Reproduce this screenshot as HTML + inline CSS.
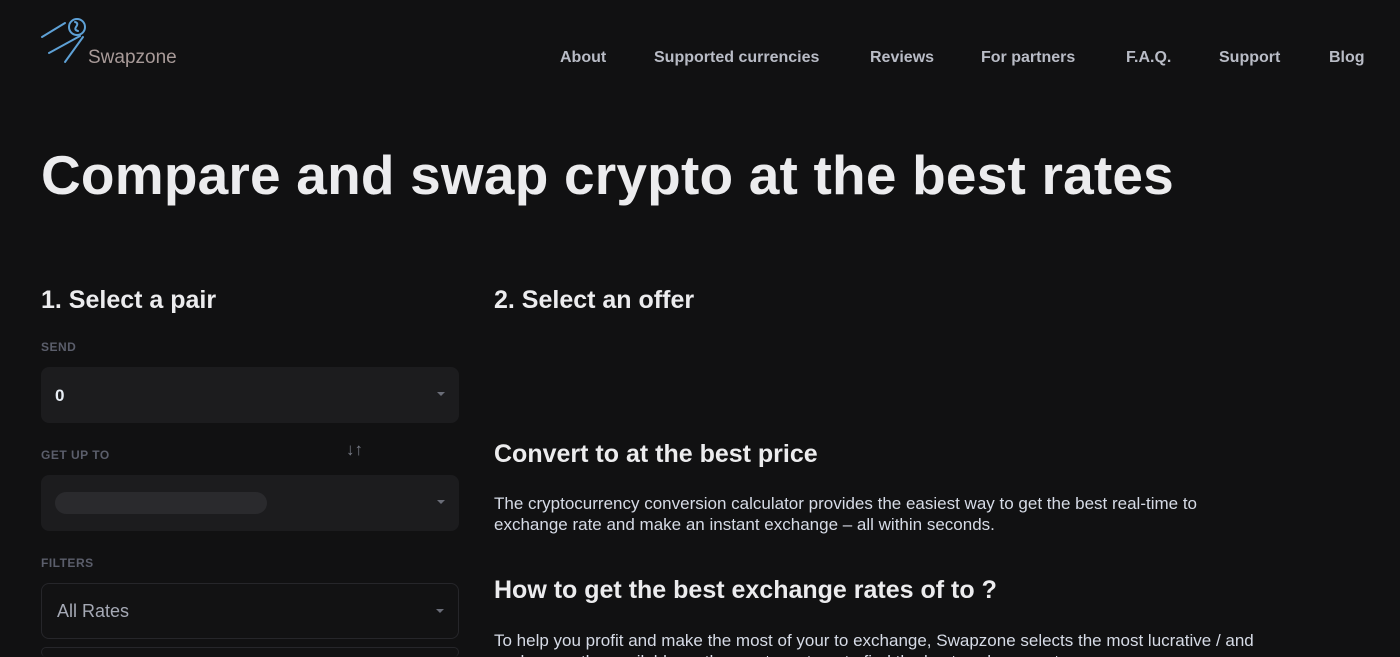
<!DOCTYPE html>
<html><head><meta charset="utf-8"><style>
*{margin:0;padding:0;box-sizing:border-box}
html,body{width:1400px;height:657px;overflow:hidden}
body{background:#111112;font-family:"Liberation Sans",sans-serif;color:#e8e8ea;position:relative}
.a{position:absolute}
.nav a{position:absolute;top:49px;font-size:16px;font-weight:bold;color:#b9bcc6;text-decoration:none;white-space:nowrap}
h1{position:absolute;left:41px;top:143px;font-size:55px;font-weight:bold;color:#ececee;white-space:nowrap;letter-spacing:0.2px}
h2{position:absolute;font-size:25px;font-weight:bold;color:#ececee;white-space:nowrap}
.lab{position:absolute;left:41px;font-size:12px;font-weight:bold;color:#5b5e6b;letter-spacing:0.5px}
.box{position:absolute;left:41px;width:418px;height:56px;border-radius:8px;background:#1c1c1e}
.car{position:absolute;right:14px;top:25px;width:0;height:0;border-left:4px solid transparent;border-right:4px solid transparent;border-top:4px solid #6a6d78}
p{position:absolute;left:494px;font-size:17px;line-height:21px;color:#d6dbe6;width:770px}
</style></head><body>
<svg class="a" style="left:40px;top:15px" width="50" height="50" viewBox="0 0 50 50" fill="none" stroke="#5ea1d6" stroke-width="2" stroke-linecap="round">
<circle cx="37" cy="12" r="8"/><path d="M2 22 L25 8"/><path d="M9 38 L40 21"/><path d="M25 47 L43 22"/><path d="M35 7 q4 1 1 5 q-2 3 2 4"/></svg>
<div class="a" style="left:88px;top:47px;font-size:19px;color:#a89a98">Swapzone</div>
<div class="nav">
<a style="left:560px">About</a><a style="left:654px">Supported currencies</a><a style="left:870px">Reviews</a><a style="left:981px">For partners</a><a style="left:1126px">F.A.Q.</a><a style="left:1219px">Support</a><a style="left:1329px">Blog</a></div>
<h1>Compare and swap crypto at the best rates</h1>
<h2 style="left:41px;top:286px">1. Select a pair</h2>
<h2 style="left:494px;top:286px">2. Select an offer</h2>
<div class="lab" style="top:340px">SEND</div>
<div class="box" style="top:367px"><div class="a" style="left:14px;top:19px;font-size:17px;font-weight:bold;color:#e8eef5">0</div><div class="car"></div></div>
<div class="lab" style="top:448px">GET UP TO</div>
<div class="a" style="left:346px;top:440px;font-size:17px;color:#777b86">↓↑</div>
<div class="box" style="top:475px"><div class="a" style="left:14px;top:17px;width:212px;height:22px;border-radius:11px;background:#2a2a2d"></div><div class="car"></div></div>
<div class="lab" style="top:556px">FILTERS</div>
<div class="box" style="top:583px;background:#121213;border:1px solid #26262a"><div class="a" style="left:15px;top:17px;font-size:18px;color:#a5a9b5">All Rates</div><div class="car"></div></div>
<div class="box" style="top:647px;height:10px;background:#121213;border:1px solid #26262a;border-bottom:none"></div>
<h2 style="left:494px;top:440px">Convert to at the best price</h2>
<p style="top:493px">The cryptocurrency conversion calculator provides the easiest way to get the best real-time to exchange rate and make an instant exchange – all within seconds.</p>
<h2 style="left:494px;top:576px">How to get the best exchange rates of to ?</h2>
<p style="top:630px;height:27px;overflow:hidden">To help you profit and make the most of your to exchange, Swapzone selects the most lucrative / and exchanges the available on the most crypto ... to find the best exchange rate</p>
</body></html>
